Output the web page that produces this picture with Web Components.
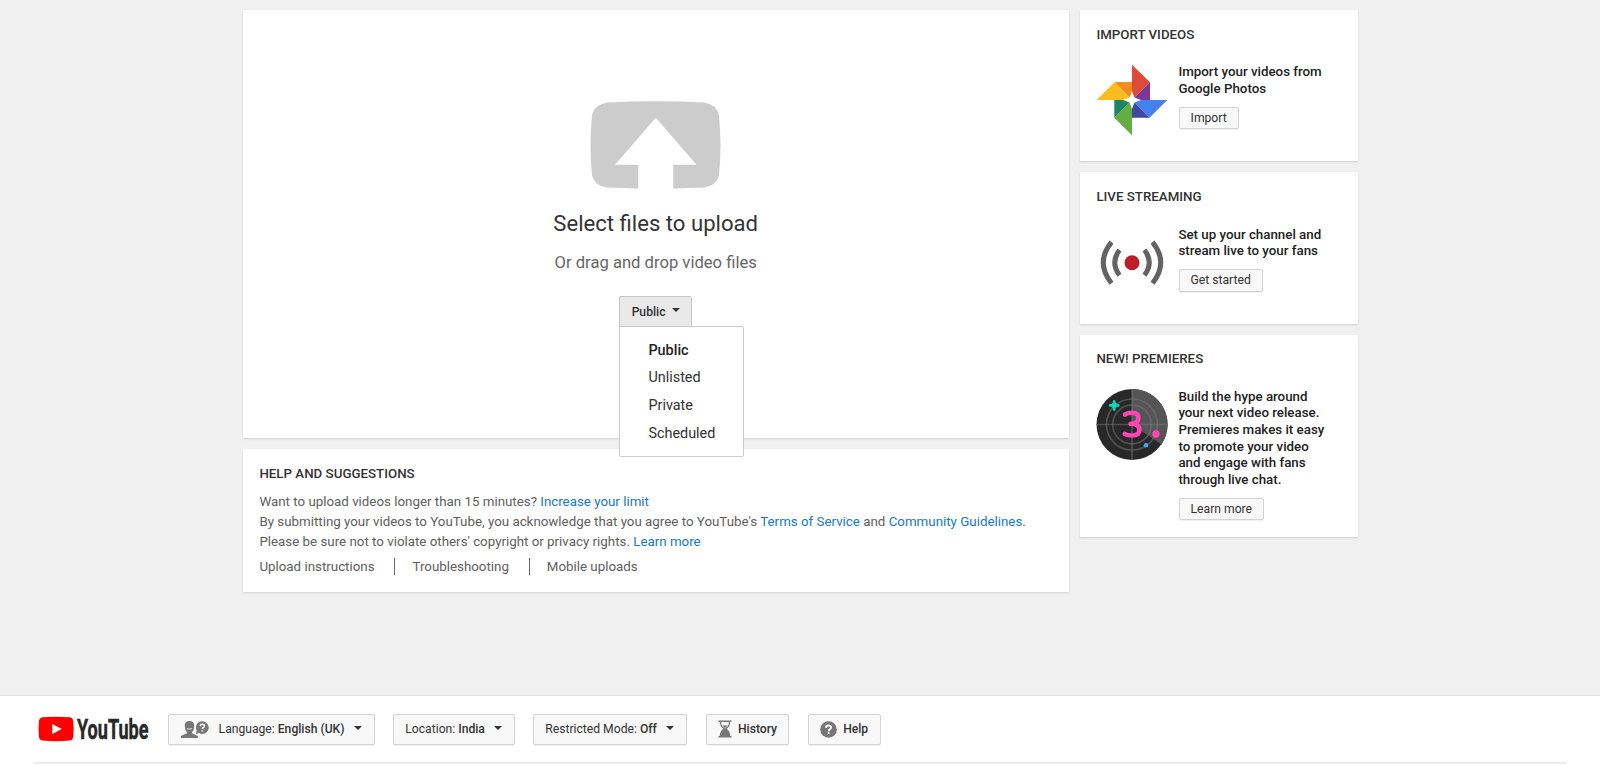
<!DOCTYPE html>
<html lang="en">
<head>
<meta charset="utf-8">
<title>Upload - YouTube</title>
<style>
html,body{margin:0;height:100%}
body{font-family:Roboto,Arial,sans-serif;overflow:hidden;background:#f0f0f0}
</style>
</head>
<body>
<upload-page></upload-page>

<script>
const define=(name,html,setup)=>{
  const t=document.createElement('template');
  t.innerHTML=html;
  customElements.define(name,class extends HTMLElement{
    constructor(){
      super();
      this.attachShadow({mode:'open'}).appendChild(t.content.cloneNode(true));
    }
    connectedCallback(){ if(setup) setup(this,this.shadowRoot); }
  });
};

define('yt-card',`
<style>
:host{display:block;box-sizing:border-box;background:#fff;padding:15.8px 16px 17px 16.4px;box-shadow:0 1px 2px rgba(0,0,0,.13)}
h2{margin:0;font:500 13.32px/17px Roboto,Arial,sans-serif;color:#333;text-transform:uppercase}
:host(:not([heading])) h2{display:none}
</style>
<h2></h2><slot></slot>`,(el,root)=>{root.querySelector('h2').textContent=el.getAttribute('heading')||'';});

define('yt-button',`
<style>
:host{display:inline-flex;box-sizing:border-box;align-items:center;height:22.4px;padding:0 11px;border:1px solid #d3d3d3;border-radius:2px;background:#f8f8f8;color:#333;font-size:12.15px;line-height:14px;white-space:pre;box-shadow:0 1px 0 rgba(0,0,0,.05)}
:host([large]){height:31px}
:host([pressed]){background:#e9e9e9;border-color:#c6c6c6;box-shadow:none;border-radius:2px 2px 0 0}
.arrow{display:none;width:0;height:0;border:4.5px solid transparent;border-top-color:#333;border-bottom:0;margin:-3px 0 0 6.5px}
:host([dropdown]) .arrow{display:block}
:host([large]) .arrow{margin-left:9px}
::slotted(b){font-weight:500}
</style>
<slot name="icon"></slot><slot></slot><span class="arrow"></span>`);

define('privacy-menu',`
<style>
:host{display:block;position:relative;width:73.5px;height:31px}
yt-button{width:73px;height:31px;padding:0 0 0 11.2px;font-weight:500}
ul{position:absolute;z-index:5;left:0;top:30px;box-sizing:border-box;width:125px;height:131px;margin:0;padding:9.5px 0 0 28px;list-style:none;background:#fff;border:1px solid #ccc;border-radius:0 2px 2px 2px;color:#333;font-size:14.4px;line-height:27.8px}
li:first-child{font-weight:500;color:#222}
</style>
<yt-button pressed dropdown>Public</yt-button>
<ul><li>Public</li><li>Unlisted</li><li>Private</li><li>Scheduled</li></ul>`);

define('upload-drop',`
<style>
:host{display:flex;flex-direction:column;align-items:center}
svg{display:block;width:131px;height:88px;margin:74.7px 1px 0 0}
h1{margin:21.4px 1px 0 0;font-weight:400;font-size:22.12px;line-height:26px;color:#333}
p{margin:16.6px 1px 23.5px 0;font-size:16.62px;line-height:20px;color:#666}
</style>
<svg viewBox="0 0 131 88"><path fill="#ccc" d="M17 1.6Q65 -1 114 1.6Q127 4 128.9 14Q132.2 45 128.9 75Q126 85 114 86.4L83.3 87.6V63.8H106.5L65.8 16.8L25 63.8H48.3V87.6L17 86.4Q5 85 2.1 75Q-1.2 45 2.1 14Q4 4 17 1.6Z"/></svg>
<h1>Select files to upload</h1>
<p>Or drag and drop video files</p>
<privacy-menu></privacy-menu>`);

define('help-links',`
<style>
:host{display:block;color:#606060;font-size:13.33px;line-height:20px}
p{margin:0;white-space:nowrap}
p:first-of-type{margin-top:9.9px}
a{color:#167ac6}
nav{display:flex;margin-top:5.9px;height:16.6px;line-height:17px}
span+span{margin-left:19.7px;padding-left:17.2px;border-left:1.4px solid #666}
</style>
<p>Want to upload videos longer than 15 minutes? <a>Increase your limit</a></p>
<p>By submitting your videos to YouTube, you acknowledge that you agree to YouTube's <a>Terms of Service</a> and <a>Community Guidelines</a>.</p>
<p>Please be sure not to violate others' copyright or privacy rights. <a>Learn more</a></p>
<nav><span>Upload instructions</span><span>Troubleshooting</span><span>Mobile uploads</span></nav>`);

define('promo-item',`
<style>
:host{display:flex;gap:10px;margin-top:21.4px}
::slotted(svg){display:block;flex:none;width:72px;height:72px}
.text{margin:0 0 9.3px;font-weight:500;font-size:13.32px;line-height:16.65px;color:#222;white-space:nowrap}
yt-button{margin-left:.2px}
</style>
<slot name="art"></slot>
<div><div class="text"><slot></slot></div><yt-button></yt-button></div>`,(el,root)=>{root.querySelector('yt-button').textContent=el.getAttribute('action');});

define('yt-logo',`
<style>
:host{display:block;width:112px;height:28px}
svg{display:block;overflow:visible}
text{font:700 28.5px Roboto,Arial,sans-serif;fill:#282828;stroke:#282828;stroke-width:.5px}
</style>
<svg width="112" height="28" viewBox="0 0 112 28">
<path fill="#f00" d="M4.5 2.3Q18 1.2 31.8 2.3Q34.8 2.8 35.2 6Q36.2 14 35.2 22Q34.8 25 31.8 25.6Q18 26.8 4.5 25.6Q1.4 25 1 22Q0 14 1 6Q1.4 2.8 4.5 2.3Z"/>
<path fill="#fff" d="M14.3 8.9V19L23.8 14Z"/>
<text x="39" y="24" textLength="71.5" lengthAdjust="spacingAndGlyphs">YouTube</text>
</svg>`);

define('page-footer',`
<style>
:host{display:block;box-sizing:border-box;height:71px;padding:17.5px 33.5px 0;background:#fff;border-top:1px solid #e4e4e4}
.row{display:flex;align-items:center;height:31px;padding-left:4.5px}
yt-logo{margin-right:17.6px}
yt-button+yt-button{margin-left:18.7px}
yt-button svg{display:block;flex:none;margin-right:6px}
hr{margin:17.5px 0 0;border:0;height:2px;background:#ebebeb}
</style>
<div class="row">
<yt-logo></yt-logo>
<yt-button large dropdown style="width:207px"><svg slot="icon" width="30" height="19" viewBox="0 0 30 19" style="margin-right:9px"><path fill="#777" d="M4.8 6Q4.8 1 9.5 1T14.2 6Q14.2 10.4 12 12.3V13.2L17.8 16V18H.8V16L7 13.2V12.3Q4.8 10.4 4.8 6Z"/><path d="M7 8.6Q9.5 9.8 12 8.6" stroke="#f8f8f8" stroke-width=".9" fill="none"/><path fill="#777" d="M22.4 1.3a6.3 6.3 0 1 1 0 12.6q-2 0-3.4-1L15.8 14l.9-3.4a6.3 6.3 0 0 1 5.7-9.3Z"/><path d="M20.2 6.1Q20.4 4.2 22.4 4.2T24.5 5.9C24.5 7.4 22.4 7.4 22.4 9M22.4 10V11.4" stroke="#fff" stroke-width="1.5" fill="none"/></svg>Language: <b>English (UK)</b></yt-button>
<yt-button large dropdown style="width:121.3px">Location: <b>India</b></yt-button>
<yt-button large dropdown style="width:154px">Restricted Mode: <b>Off</b></yt-button>
<yt-button large style="width:83.5px"><svg slot="icon" width="14" height="18" viewBox="0 0 14 18"><path fill="#777" d="M.5.5h13V2h-13zM.5 16h13v1.5h-13zM7 8.5Q12 12 12 16H2Q2 12 7 8.5Z"/><path fill="none" stroke="#777" stroke-width="1.3" d="M2.5 2Q2.5 6.5 6.3 8.8Q2.5 11 2.5 16M11.5 2Q11.5 6.5 7.7 8.8Q11.5 11 11.5 16"/><path fill="#777" d="M4.3 5.4h5.4L7 8.2Z"/></svg><b>History</b></yt-button>
<yt-button large style="width:72.5px"><svg slot="icon" width="17" height="17" viewBox="0 0 17 17"><circle cx="8.5" cy="8.5" r="8.3" fill="#777"/><path d="M5.9 6.9Q6 4.5 8.5 4.5T11.1 6.5C11.1 8.3 8.6 8.3 8.6 10.2M8.6 11.2V13" stroke="#fff" stroke-width="1.8" fill="none"/></svg><b>Help</b></yt-button>
</div>
<hr>`);

define('upload-page',`
<style>
:host{display:flex;flex-direction:column;height:766px}
main{flex:1;display:grid;grid-template-columns:826px 278px;justify-content:center;align-items:start;column-gap:11px;padding-top:10.2px;padding-left:1px}
.col{display:flex;flex-direction:column;gap:11px}
.drop{height:428.2px}
.help{height:142.7px}
.side{min-height:151.2px}
</style>
<main>
<div class="col">
<yt-card class="drop"><upload-drop></upload-drop></yt-card>
<yt-card class="help" heading="Help and suggestions"><help-links></help-links></yt-card>
</div>
<div class="col">
<yt-card class="side" heading="Import videos"><promo-item action="Import">
<svg slot="art" viewBox="0 0 72 72">
<path fill="#fbbc1e" d="M.7 36L18.8 18L36 36Z"/><path fill="#f28b20" d="M18.8 18H36V36Z"/>
<path fill="#dd4b39" d="M36 .7L54 18.3L36 36Z"/><path fill="#7e3794" d="M54 18.3V36H36Z"/>
<path fill="#4580ef" d="M71.3 36L53.5 53.7L36 36Z"/><path fill="#4148a1" d="M53.5 53.7H36V36Z"/>
<path fill="#62ae45" d="M36 71.3L18.3 53.7L36 36Z"/><path fill="#1c8660" d="M18.3 53.7V36H36Z"/>
<path fill="#fff" d="M36 27L38.4 33.6L45 36L38.4 38.4L36 45L33.6 38.4L27 36L33.6 33.6Z"/></svg>Import your videos from<br>Google Photos</promo-item></yt-card>
<yt-card class="side" heading="Live streaming"><promo-item action="Get started">
<svg slot="art" viewBox="0 0 72 72"><circle cx="36" cy="35.7" r="7.5" fill="#b92027"/><path fill="none" stroke="#636363" stroke-width="5" d="M23.5 23.1Q14 35.5 23.5 48.3M48.5 23.1Q58 35.5 48.5 48.3M15.5 15.1Q-1 35.5 15.5 56.3M56.5 15.1Q73 35.5 56.5 56.3"/></svg>Set up your channel and<br>stream live to your fans</promo-item></yt-card>
<yt-card class="side" heading="New! Premieres"><promo-item action="Learn more">
<svg slot="art" viewBox="0 0 72 72"><circle cx="36" cy="35.5" r="35.5" fill="#282828"/><path fill="#555" d="M36 35.5V0A35.5 35.5 0 0 1 65.5 55.5Z"/>
<g fill="none" stroke="#777" stroke-opacity=".5" stroke-width="1.7"><circle cx="36" cy="35.5" r="25.5"/><circle cx="36" cy="35.5" r="19.3"/><path d="M.5 35.5H71.5M36 0V71"/></g>
<path fill="none" stroke="#ff44b4" stroke-width="4.6" stroke-linecap="round" stroke-linejoin="round" d="M29 25.5Q32 23.7 36 23.7Q42.5 24 42.5 29Q42.5 34.5 34.5 34.8Q43.5 35 43.5 40.8Q43.5 46.5 36 46.5Q31.5 46.5 28.7 45"/>
<circle cx="60" cy="45" r="3.7" fill="#ff44b4"/><circle cx="50" cy="56.3" r="2.3" fill="#3ea6ff"/>
<path d="M18.2 12.5V20.5M14.2 16.4H22.2" stroke="#0ed8b4" stroke-width="2.8" stroke-linecap="round"/><circle cx="18.2" cy="16.4" r="2.8" fill="#0ed8b4"/></svg>Build the hype around<br>your next video release.<br>Premieres makes it easy<br>to promote your video<br>and engage with fans<br>through live chat.</promo-item></yt-card>
</div>
</main>
<page-footer></page-footer>`);
</script>
</body>
</html>
